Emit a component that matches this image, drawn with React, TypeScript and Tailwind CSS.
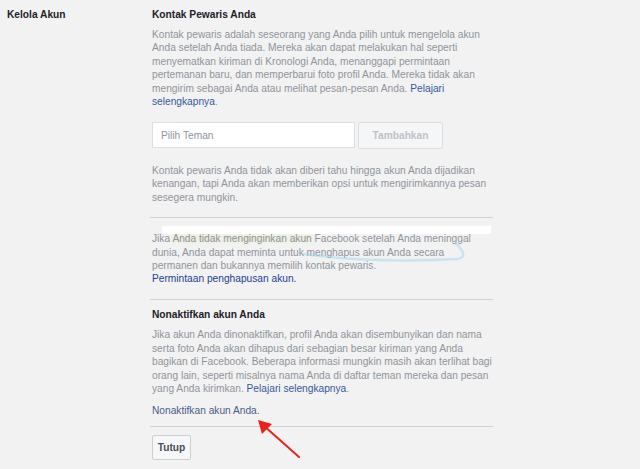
const muted = "text-[#90949c]";
const link = "text-[#365899]";

function Divider() {
  return <div className="h-px w-[343px] bg-[#cfd1d5]" />;
}

export default function App() {
  return (
    <div className="relative min-h-[469px] w-[640px] overflow-hidden bg-[#f2f2f2] font-['Liberation_Sans',Arial,sans-serif] text-[10.2px] leading-[13.4px]">
      <div className="flex">
        <div className="w-[150px] pl-[7px] pt-[8px] font-bold text-[#1d2129]">Kelola Akun</div>

        <div className="w-[343px] pt-[8px]">
          {/* kontak pewaris */}
          <div className="pl-[2px]">
            <h3 className="font-bold text-[#1d2129]">Kontak Pewaris Anda</h3>
            <p className={`mt-[6.6px] w-[344px] ${muted}`}>
              Kontak pewaris adalah seseorang yang Anda pilih untuk mengelola akun Anda setelah Anda tiada.
              Mereka akan dapat melakukan hal seperti menyematkan kiriman di Kronologi Anda, menanggapi
              permintaan pertemanan baru, dan memperbarui foto profil Anda. Mereka tidak akan mengirim sebagai
              Anda atau melihat pesan-pesan Anda. <span className={link}>Pelajari selengkapnya</span>.
            </p>

            <div className="mt-[14px] flex gap-[3px]">
              <div className="flex h-[26px] w-[203px] items-center border border-[#dddfe2] bg-white px-[8px] text-[#90949c]">
                Pilih Teman
              </div>
              <button className="h-[27px] w-[85px] rounded-[2px] border border-[#dddfe2] bg-[#f5f6f7] font-bold text-[#bec3c9]">
                Tambahkan
              </button>
            </div>

            <p className={`mt-[14.5px] w-[344px] ${muted}`}>
              Kontak pewaris Anda tidak akan diberi tahu hingga akun Anda dijadikan kenangan, tapi Anda akan
              memberikan opsi untuk mengirimkannya pesan sesegera mungkin.
            </p>
          </div>
          <div className="mt-[13px]">
            <Divider />
          </div>

          {/* penghapusan */}
          <div className="ml-[12px] mt-[8px] h-[8px] w-[329px] bg-white" />
          <div className="-mt-[2px] pl-[2px]">
            <p className={`w-[334px] ${muted}`}>
              Jika <span className="[text-shadow:0_0_3px_#dbe8a4]">Anda tidak menginginkan akun</span> Facebook
              setelah Anda meninggal dunia, Anda dapat meminta untuk menghapus akun Anda secara permanen dan
              bukannya memilih kontak pewaris.
            </p>
            <p className="text-[#1c3e8f]">Permintaan penghapusan akun.</p>
          </div>
          <div className="mt-[13.5px]">
            <Divider />
          </div>

          {/* nonaktifkan */}
          <div className="pl-[2px] pt-[8px]">
            <h3 className="font-bold text-[#1d2129]">Nonaktifkan akun Anda</h3>
            <p className={`mt-[6.6px] w-[346px] ${muted}`}>
              Jika akun Anda dinonaktifkan, profil Anda akan disembunyikan dan nama serta foto Anda akan
              dihapus dari sebagian besar kiriman yang Anda bagikan di Facebook. Beberapa informasi mungkin
              masih akan terlihat bagi orang lain, seperti misalnya nama Anda di daftar teman mereka dan pesan
              yang Anda kirimkan. <span className={link}>Pelajari selengkapnya</span>.
            </p>
            <p className="mt-[9px] text-[#4b5c8a]">Nonaktifkan akun Anda.</p>
          </div>
          <div className="mt-[8px]">
            <Divider />
          </div>
          <div className="pl-[2px] pt-[8px]">
            <button className="h-[25px] w-[39px] rounded-[2px] border border-[#ccd0d5] bg-[#f6f7f9] font-bold text-[#4b4f56]">
              Tutup
            </button>
          </div>
        </div>
      </div>

      {/* blue marker swirl */}
      <svg className="absolute left-[290px] top-[238px]" width="190" height="30" viewBox="0 0 190 30">
        <path
          d="M14 16 C 40 20, 100 25, 168 21 C 176 20, 174 12, 166 6"
          fill="none"
          stroke="#8ad0ef"
          strokeOpacity="0.4"
          strokeWidth="2.5"
          strokeLinecap="round"
        />
      </svg>

      {/* red arrow */}
      <svg className="absolute left-[250px] top-[412px]" width="60" height="52" viewBox="0 0 60 52">
        <line x1="49" y1="45" x2="13" y2="13" stroke="#e8221c" strokeWidth="2" strokeLinecap="round" />
        <polygon points="8,8 22,12 12,22" fill="#e8221c" />
      </svg>
    </div>
  );
}
